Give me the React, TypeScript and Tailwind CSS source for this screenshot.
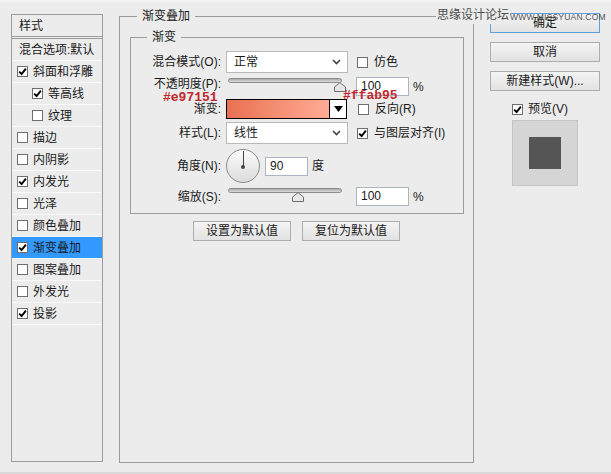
import React from 'react';

const font = "font-['Liberation_Sans','Noto_Sans_CJK_SC',sans-serif]";

function Check({ on }: { on?: boolean }) {
  return (
    <span className="w-[11px] h-[11px] border border-[#6e6e6e] bg-white flex items-center justify-center shrink-0">
      {on && (
        <svg width="9" height="9" viewBox="0 0 9 9">
          <path d="M1.2 4.6 L3.6 7 L7.9 1.6" stroke="#000" strokeWidth="1.9" fill="none" />
        </svg>
      )}
    </span>
  );
}

function Chevron() {
  return (
    <svg width="9" height="6" viewBox="0 0 9 6" className="mr-[6px]">
      <path d="M1 1 L4.5 4.5 L8 1" stroke="#444" strokeWidth="1.6" fill="none" />
    </svg>
  );
}

function Select({ value }: { value: string }) {
  return (
    <div className="w-[122px] h-[22px] border border-[#b9b9b9] bg-white flex items-center justify-between pl-[7px]">
      <span>{value}</span>
      <Chevron />
    </div>
  );
}

function Slider({ pos }: { pos: number }) {
  return (
    <div className="relative w-[130px] h-full">
      <div className="absolute left-[2px] top-[1px] w-[114px] h-[5px] rounded-full border border-[#8c8c8c] bg-gradient-to-b from-[#a8a8a8] to-[#dedede]" />
      <svg width="12" height="10" viewBox="0 0 12 10" className="absolute top-[5px]" style={{ left: pos }}>
        <path d="M0.5 9.5 L0.5 5 L6 0.6 L11.5 5 L11.5 9.5 Z" fill="#e6e6e6" stroke="#707070" />
      </svg>
    </div>
  );
}

function Num({ value, w }: { value: string; w: string }) {
  return (
    <div className={`${w} h-[19px] border border-[#abb4c0] bg-white pl-[4px] leading-[17px] text-[12px]`}>{value}</div>
  );
}

function Btn({ label, w, blue }: { label: string; w: string; blue?: boolean }) {
  return (
    <div
      className={`${w} h-[20px] border ${blue ? 'border-[#5f9fdc]' : 'border-[#adadad]'} bg-gradient-to-b from-[#f4f4f4] to-[#e2e2e2] flex items-center justify-center text-[12px] text-[#1a1a1a]`}
    >
      {label}
    </div>
  );
}

const rows = [
  { name: '斜面和浮雕', on: true },
  { name: '等高线', on: true, sub: true },
  { name: '纹理', sub: true },
  { name: '描边' },
  { name: '内阴影' },
  { name: '内发光', on: true },
  { name: '光泽' },
  { name: '颜色叠加' },
  { name: '渐变叠加', on: true, sel: true },
  { name: '图案叠加' },
  { name: '外发光' },
  { name: '投影', on: true },
];

export default function App() {
  return (
    <div className={`${font} relative w-[611px] h-[474px] bg-[#ececec] border-t-2 border-t-[#f3f3f3] border-b-2 border-b-[#d9d9d9] text-[12px] text-[#1a1a1a] flex items-start pl-[11px]`}>
      {/* left list */}
      <div className="mt-[12px] w-[92px] h-[448px] border border-[#9c9c9c] flex flex-col">
        <div className="h-[22px] border-b border-[#9c9c9c] pl-[7px] pt-[2px]">样式</div>
        <div className="mt-[1px] border-t border-[#9c9c9c]">
          <div className="h-[22px] pl-[7px] flex items-center border-b border-[#f9f9f9]">混合选项:默认</div>
          {rows.map((r) => (
            <div
              key={r.name}
              className={`h-[22px] flex items-center gap-[5px] border-b border-[#f9f9f9] ${r.sub ? 'pl-[20px]' : 'pl-[5px]'} ${r.sel ? 'bg-[#3399ff]' : ''}`}
            >
              <Check on={r.on} />
              <span>{r.name}</span>
            </div>
          ))}
        </div>
      </div>

      {/* main */}
      <fieldset className="ml-[16px] mt-[6px] w-[355px] h-[455px] border border-[#9c9c9c] p-0">
        <legend className="ml-[17px] px-[5px] leading-[16px]">渐变叠加</legend>
        <fieldset className="ml-[10px] mt-[5px] w-[334px] h-[185px] border border-[#9c9c9c] p-0">
          <legend className="ml-[16px] px-[5px] leading-[16px]">渐变</legend>
          <div className="relative pt-[6px]">
            <div className="h-[22px] flex items-center">
              <span className="w-[90px] text-right">混合模式(O):</span>
              <div className="ml-[5px]"><Select value="正常" /></div>
              <div className="ml-[9px] flex items-center gap-[6px]"><Check /><span>仿色</span></div>
            </div>
            <div className="mt-[4px] h-[19px] flex items-center">
              <span className="w-[90px] text-right self-start leading-[14px]">不透明度(P):</span>
              <div className="ml-[5px] h-full"><Slider pos={108} /></div>
              <Num value="100" w="w-[53px]" />
              <span className="ml-[4px]">%</span>
            </div>
            <div className="mt-[3px] h-[20px] flex items-center">
              <span className="w-[90px] text-right">渐变:</span>
              <div className="ml-[5px] w-[121px] h-[20px] border border-black flex">
                <div className="flex-1 bg-gradient-to-r from-[#e97151] to-[#ffab95]" />
                <div className="w-[17px] border-l border-black bg-white flex items-center justify-center">
                  <svg width="9" height="6" viewBox="0 0 9 6"><path d="M0 0 L9 0 L4.5 6 Z" fill="#000" /></svg>
                </div>
              </div>
              <div className="ml-[11px] flex items-center gap-[6px]"><Check /><span>反向(R)</span></div>
            </div>
            <div className="mt-[3px] h-[22px] flex items-center">
              <span className="w-[90px] text-right">样式(L):</span>
              <div className="ml-[5px]"><Select value="线性" /></div>
              <div className="ml-[9px] flex items-center gap-[6px]"><Check on /><span>与图层对齐(I)</span></div>
            </div>
            <div className="mt-[5px] h-[34px] flex items-center">
              <span className="w-[90px] text-right">角度(N):</span>
              <div className="ml-[5px] w-[34px] h-[34px] rounded-full border border-[#8a8a8a] bg-gradient-to-b from-[#fbfbfb] to-[#dcdcdc] relative">
                <div className="absolute left-[15.5px] top-[1px] w-[1px] h-[16px] bg-[#444]" />
                <div className="absolute left-[14px] top-[15px] w-[4px] h-[4px] rounded-full bg-[#444]" />
              </div>
              <div className="ml-[5px]"><Num value="90" w="w-[43px]" /></div>
              <span className="ml-[4px]">度</span>
            </div>
            <div className="mt-[4px] h-[19px] flex items-center">
              <span className="w-[90px] text-right">缩放(S):</span>
              <div className="ml-[5px] h-full"><Slider pos={66} /></div>
              <Num value="100" w="w-[53px]" />
              <span className="ml-[4px]">%</span>
            </div>

            <span className="absolute left-[32px] top-[47px] font-['Liberation_Mono',monospace] font-bold text-[13px] leading-[12px] text-[#c0282e]">#e97151</span>
            <span className="absolute left-[212px] top-[45px] font-['Liberation_Mono',monospace] font-bold text-[13px] leading-[12px] text-[#c0282e]">#ffab95</span>
          </div>
        </fieldset>
        <div className="mt-[7px] flex justify-center gap-[11px]">
          <Btn label="设置为默认值" w="w-[98px]" />
          <Btn label="复位为默认值" w="w-[98px]" />
        </div>
      </fieldset>

      {/* right column */}
      <div className="ml-[16px] mt-[11px] w-[110px] flex flex-col">
        <Btn label="确定" w="w-[110px]" blue />
        <div className="mt-[9px]"><Btn label="取消" w="w-[110px]" /></div>
        <div className="mt-[9px]"><Btn label="新建样式(W)..." w="w-[110px]" /></div>
        <div className="mt-[10px] pl-[22px] h-[16px] flex items-center gap-[5px]">
          <Check on />
          <span>预览(V)</span>
        </div>
        <div className="mt-[3px] ml-[22px] w-[66px] h-[66px] border border-[#c4c4c4] bg-[#d5d5d5] flex items-center justify-center">
          <div className="w-[32px] h-[32px] bg-[#555555]" />
        </div>
      </div>

      {/* watermark */}
      <span className="absolute left-[436px] top-[5px] px-[1px] bg-[#ececec] text-[12px] leading-[17px] text-[#4d4d4d]">思缘设计论坛</span>
      <span className="absolute left-[510px] top-[11px] text-[8.5px] leading-[9px] tracking-[0.2px] text-[#555]">WWW.MISSYUAN.COM</span>
    </div>
  );
}
